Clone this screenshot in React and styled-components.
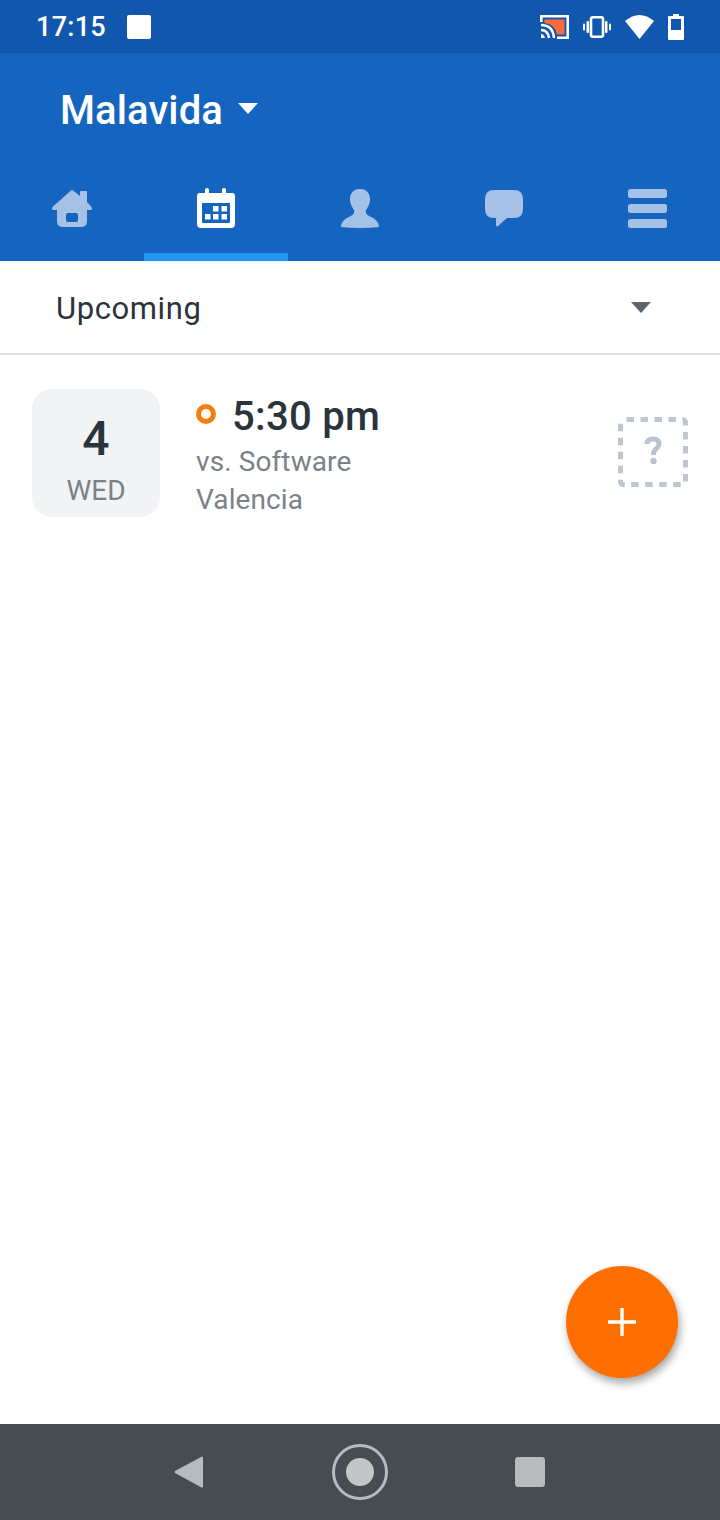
import React from 'react'
import styled, { createGlobalStyle } from 'styled-components'

const GlobalStyle = createGlobalStyle`
html, body {
  margin: 0;
  padding: 0;
  background: #fff;
  font-family: Roboto, "Liberation Sans", sans-serif;
}
`

const Page = styled.div`
position: relative;
display: flex;
flex-direction: column;
width: 720px;
height: 1520px;
overflow: hidden;
background: #fff;
`

const StatusBar = styled.div`
display: flex;
align-items: center;
justify-content: space-between;
height: 53px;
padding: 0 36px 0 36px;
background: #1257ae;
color: #fff;
box-sizing: border-box;
`

const StatusLeft = styled.div`
display: flex;
align-items: center;
gap: 21px;
`

const Clock = styled.span`
padding-top: 2px;
font-size: 27px;
font-weight: 500;
line-height: 53px;
letter-spacing: 0.3px;
`

const Notice = styled.div`
width: 24px;
height: 24px;
border-radius: 2px;
background: #fff;
`

const StatusIcons = styled.div`
display: flex;
align-items: center;
gap: 14px;
`

const AppBar = styled.header`
display: flex;
flex-direction: column;
height: 208px;
background: #1565c0;
`

const TeamRow = styled.div`
display: flex;
align-items: center;
gap: 15px;
height: 115px;
padding: 0 0 0 60px;
`

const TeamName = styled.div`
font-size: 40px;
font-weight: 500;
color: #fff;
line-height: 115px;
letter-spacing: 0.1px;
`

const Caret = styled.div`
width: 0;
height: 0;
margin-top: ${({ $lift }) => -$lift}px;
border-left: 10px solid transparent;
border-right: 10px solid transparent;
border-top: 11px solid ${({ $color }) => $color};
`

const Tabs = styled.nav`
display: grid;
grid-template-columns: repeat(5, 144px);
height: 93px;
`

const Tab = styled.div`
display: flex;
align-items: center;
justify-content: center;
padding-bottom: 5px;
box-sizing: border-box;
border-bottom: 8px solid ${({ $active }) => ($active ? '#2196f3' : 'transparent')};
`

const FilterRow = styled.div`
display: flex;
align-items: center;
justify-content: space-between;
height: 94px;
padding: 0 69px 0 56px;
box-sizing: border-box;
border-bottom: 2px solid #dfe1e3;
box-shadow: inset 0 3px 3px -2px rgba(0, 0, 0, 0.06);
`

const FilterLabel = styled.div`
padding-top: 2px;
font-size: 31px;
letter-spacing: 0.6px;
color: #2b3338;
`

const Content = styled.main`
position: relative;
flex: 1;
`

const EventRow = styled.div`
display: flex;
align-items: flex-start;
padding: 34px 32px 0;
`

const DateBox = styled.div`
display: flex;
flex-direction: column;
align-items: center;
width: 128px;
height: 128px;
border-radius: 20px;
background: #f1f3f5;
`

const DayNumber = styled.div`
margin-top: 23px;
font-size: 48px;
font-weight: 500;
line-height: 54px;
color: #29343c;
`

const DayName = styled.div`
margin-top: 9px;
font-size: 28px;
line-height: 32px;
color: #7b8287;
`

const EventInfo = styled.div`
flex: 1;
margin-left: 36px;
`

const TimeRow = styled.div`
display: flex;
align-items: center;
gap: 16px;
height: 54px;
`

const StatusDot = styled.div`
width: 20px;
height: 20px;
margin-top: -4px;
border: 5px solid #f57c0f;
border-radius: 50%;
box-sizing: border-box;
`

const EventTime = styled.div`
font-size: 40px;
font-weight: 500;
letter-spacing: 0.3px;
color: #29343c;
`

const EventLine = styled.div`
font-size: 28px;
line-height: 38px;
letter-spacing: 0.1px;
color: #7b8287;
`

const RsvpIcon = styled.div`
margin-top: 28px;
height: 70px;
`

const Fab = styled.button`
position: absolute;
right: 42px;
bottom: 46px;
display: flex;
align-items: center;
justify-content: center;
width: 112px;
height: 112px;
padding: 0;
border: none;
border-radius: 50%;
background: #ff6f00;
box-shadow: 2px 5px 9px rgba(0, 0, 0, 0.35);
`

const NavBar = styled.footer`
display: flex;
align-items: center;
justify-content: center;
gap: 128px;
height: 96px;
background: #454c52;
`

const HomeRing = styled.div`
display: flex;
align-items: center;
justify-content: center;
width: 56px;
height: 56px;
border: 3px solid #b8bbbd;
border-radius: 50%;
box-sizing: border-box;
`

const HomeDot = styled.div`
width: 28px;
height: 28px;
border-radius: 50%;
background: #c4c7c8;
`

const RecentSquare = styled.div`
width: 30px;
height: 30px;
margin: 0 1px 0 -1px;
border-radius: 3px;
background: #b8bbbd;
`

const BackIcon = () => (
  <svg width="30" height="34" viewBox="0 0 30 34">
    <path d="M28 1.5 Q29 1 29 3 V31 Q29 33 27.5 32.5 L1 18 Q0 17 1 16 Z" fill="#b8bbbd" />
  </svg>
)

const CastIcon = () => (
  <svg width="29" height="24" viewBox="0 0 29 24">
    <path d="M1.3 7 V1.3 H27.7 V22.7 H17" fill="none" stroke="#fff" strokeWidth="2.6" />
    <path d="M4.5 4.5 H24.5 V19.5 H17 Q15 9 4.5 8 Z" fill="#ff6a3c" />
    <path d="M1 10 Q13 10 14 23" fill="none" stroke="#fff" strokeWidth="2.4" />
    <path d="M1 15 Q8 15 9 23" fill="none" stroke="#fff" strokeWidth="2.4" />
    <path d="M1 19 Q4 19 5 23 H1 Z" fill="#fff" />
  </svg>
)

const VibrateIcon = () => (
  <svg width="28" height="22" viewBox="0 0 28 22">
    <rect x="8" y="1.3" width="12" height="19.4" rx="2" fill="none" stroke="#fff" strokeWidth="2.6" />
    <rect x="3.5" y="5" width="2.5" height="12" rx="1" fill="#fff" />
    <rect x="22" y="5" width="2.5" height="12" rx="1" fill="#fff" />
    <rect x="0" y="7.5" width="2" height="7" rx="1" fill="#fff" />
    <rect x="26" y="7.5" width="2" height="7" rx="1" fill="#fff" />
  </svg>
)

const WifiIcon = () => (
  <svg width="29" height="26" viewBox="0 0 29 26">
    <path d="M0 7 Q14.5 -5 29 7 L14.5 25 Z" fill="#fff" />
  </svg>
)

const BatteryIcon = () => (
  <svg width="16" height="26" viewBox="0 0 16 26">
    <path d="M5 0 H11 V2 H15 Q16 2 16 3 V25 Q16 26 15 26 H1 Q0 26 0 25 V3 Q0 2 1 2 H5 Z" fill="#fff" />
    <rect x="3" y="5" width="10" height="11" fill="#1257ae" />
  </svg>
)

const HomeIcon = () => (
  <svg width="40" height="37" viewBox="0 0 40 37">
    <path
      d="M19 0.6 Q20 0 21 0.6 L28 6 V2 Q28 1 29 1 H34 Q35 1 35 2 V12 L39.5 17 Q41 20 38 20 H35 V31 Q35 37 29 37 H11 Q5 37 5 31 V20 H2 Q-1 20 0.5 17 Z M14 25 V30 Q14 32 16 32 H24 Q26 32 26 30 V25 Q26 23 24 23 H16 Q14 23 14 25 Z"
      fill="#a6c1e6"
      fillRule="evenodd"
    />
  </svg>
)

const CalendarIcon = () => (
  <svg width="38" height="40" viewBox="0 0 38 40">
    <path
      d="M3 5 H8 V2 Q8 0 10 0 Q12 0 12 2 V5 H25 V2 Q25 0 27 0 Q29 0 29 2 V5 H35 Q38 5 38 8 V36 Q38 40 34 40 H4 Q0 40 0 36 V8 Q0 5 3 5 Z M5 15 V34 Q5 35 6 35 H32 Q33 35 33 34 V15 Z"
      fill="#fff"
      fillRule="evenodd"
    />
    <rect x="16" y="18" width="5.5" height="5.5" fill="#fff" />
    <rect x="24.5" y="18" width="5.5" height="5.5" fill="#fff" />
    <rect x="8" y="26" width="5.5" height="5.5" fill="#fff" />
    <rect x="16" y="26" width="5.5" height="5.5" fill="#fff" />
    <rect x="24.5" y="26" width="5.5" height="5.5" fill="#fff" />
  </svg>
)

const PersonIcon = () => (
  <svg width="38" height="39" viewBox="0 0 38 39">
    <path
      d="M19 0 C26 0 29 5 29 10 C29 15 27 18 25 21 C24 24 26 26 30 28 C35 30 38 34 38 38 Q30 39 19 39 Q8 39 0 38 C0 34 3 30 8 28 C12 26 14 24 13 21 C11 18 9 15 9 10 C9 5 12 0 19 0 Z"
      fill="#a6c1e6"
    />
  </svg>
)

const ChatIcon = () => (
  <svg width="38" height="37" viewBox="0 0 38 37">
    <path
      d="M9 0 H29 Q38 0 38 9 V19 Q38 28 29 28 H22 L13 36 Q11 37 11 35 V28 H9 Q0 28 0 19 V9 Q0 0 9 0 Z"
      fill="#a6c1e6"
    />
  </svg>
)

const MenuIcon = () => (
  <svg width="40" height="39" viewBox="0 0 40 39">
    <rect x="0" y="0" width="39" height="9" rx="2.5" fill="#a6c1e6" />
    <rect x="0" y="15" width="39" height="9" rx="2.5" fill="#a6c1e6" />
    <rect x="0" y="30" width="39" height="9" rx="2.5" fill="#a6c1e6" />
  </svg>
)

const QuestionIcon = () => (
  <svg width="70" height="70" viewBox="0 0 70 70">
    <rect
      x="2.5"
      y="2.5"
      width="65"
      height="65"
      rx="3"
      fill="none"
      stroke="#bfc5d1"
      strokeWidth="5"
      strokeDasharray="7.5 6.5"
      strokeDashoffset="-3"
    />
    <path
      d="M29 27 C29 23 32 22 35 22 C39 22 41 24 41 27 C41 30 39 31 37.5 32.5 C36 33.5 35.5 35 35.5 38"
      fill="none"
      stroke="#bcc2cf"
      strokeWidth="5"
    />
    <circle cx="35.5" cy="44" r="3.2" fill="#bcc2cf" />
  </svg>
)

const PlusIcon = () => (
  <svg width="28" height="28" viewBox="0 0 28 28">
    <path d="M14 0 V28 M0 14 H28" stroke="#fff" strokeWidth="3.4" />
  </svg>
)

const tabs = [
  { name: 'home', icon: <HomeIcon /> },
  { name: 'schedule', icon: <CalendarIcon />, active: true },
  { name: 'roster', icon: <PersonIcon /> },
  { name: 'chat', icon: <ChatIcon /> },
  { name: 'more', icon: <MenuIcon /> },
]

function App() {
  return (
    <Page>
      <GlobalStyle />
      <StatusBar>
        <StatusLeft>
          <Clock>17:15</Clock>
          <Notice />
        </StatusLeft>
        <StatusIcons>
          <CastIcon />
          <VibrateIcon />
          <WifiIcon />
          <BatteryIcon />
        </StatusIcons>
      </StatusBar>
      <AppBar>
        <TeamRow>
          <TeamName>Malavida</TeamName>
          <Caret $lift={4} $color="#fff" />
        </TeamRow>
        <Tabs>
          {tabs.map((tab) => (
            <Tab key={tab.name} $active={tab.active}>
              {tab.icon}
            </Tab>
          ))}
        </Tabs>
      </AppBar>
      <FilterRow>
        <FilterLabel>Upcoming</FilterLabel>
        <Caret $lift={0} $color="#5f666b" />
      </FilterRow>
      <Content>
        <EventRow>
          <DateBox>
            <DayNumber>4</DayNumber>
            <DayName>WED</DayName>
          </DateBox>
          <EventInfo>
            <TimeRow>
              <StatusDot />
              <EventTime>5:30 pm</EventTime>
            </TimeRow>
            <EventLine>vs. Software</EventLine>
            <EventLine>Valencia</EventLine>
          </EventInfo>
          <RsvpIcon>
            <QuestionIcon />
          </RsvpIcon>
        </EventRow>
        <Fab>
          <PlusIcon />
        </Fab>
      </Content>
      <NavBar>
        <BackIcon />
        <HomeRing>
          <HomeDot />
        </HomeRing>
        <RecentSquare />
      </NavBar>
    </Page>
  )
}

export default App
